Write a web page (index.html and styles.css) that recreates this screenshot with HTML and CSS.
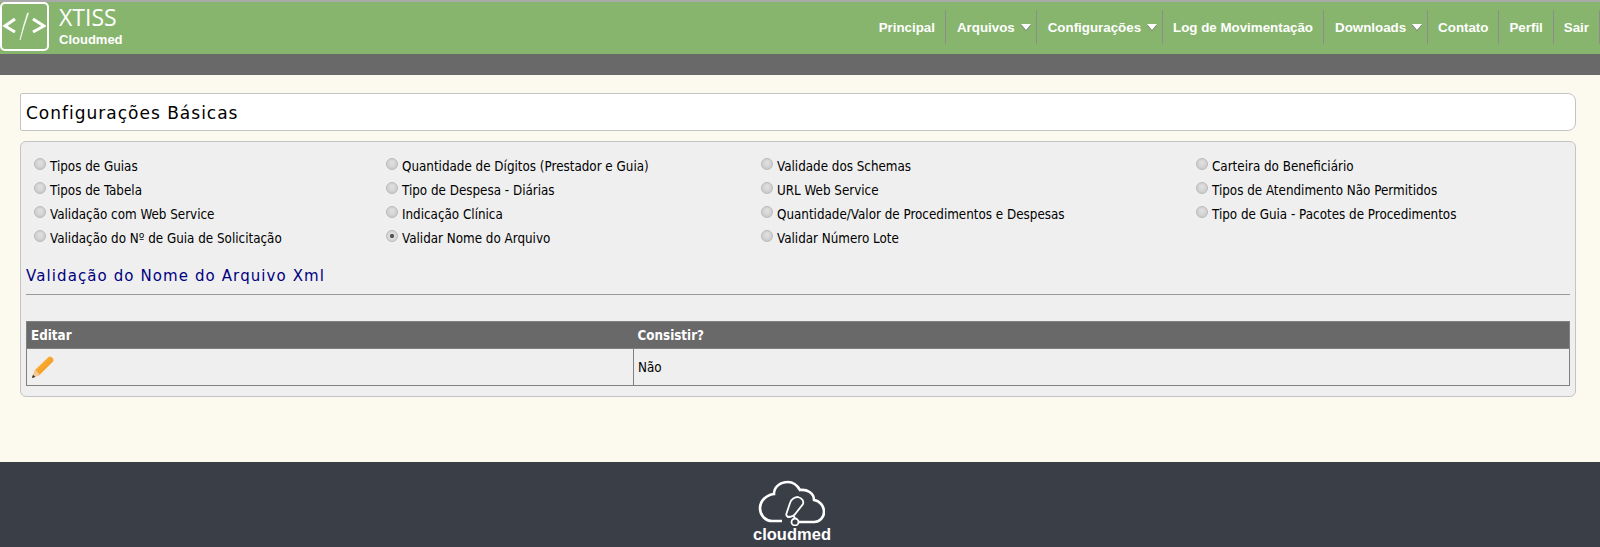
FILE: index.html

```html
<!DOCTYPE html>
<html>
<head>
<meta http-equiv="Content-Type" content="text/html;charset=utf-8">
<title>XTISS Cloudmed</title>
<link rel="stylesheet" href="styles.css">
</head>
<body>
<div class="topbar">
  <div class="brand">
    <div class="logo-box">
      <svg width="44" height="44" viewBox="0 0 44 44">
        <path d="M13 15 L3 22 L13 28" class="logo-stroke"/>
        <path d="M31 15 L42 22 L31 28" class="logo-stroke"/>
        <path d="M25.500 9 Q21 22 18 36 Q22 22 26.500 9 Z" class="logo-slash"/>
      </svg>
    </div>
    <div class="brand-text">
      <div class="brand-name">XTISS</div>
      <div class="brand-sub">Cloudmed</div>
    </div>
  </div>
  <ul class="nav">
    <li><a href="#">Principal</a></li>
    <li><a href="#" class="drop">Arquivos</a></li>
    <li><a href="#" class="drop">Configurações</a></li>
    <li><a href="#">Log de Movimentação</a></li>
    <li><a href="#" class="drop">Downloads</a></li>
    <li><a href="#">Contato</a></li>
    <li><a href="#">Perfil</a></li>
    <li><a href="#">Sair</a></li>
  </ul>
</div>
<div class="subbar"></div>

<div class="content">
  <div class="title-box">Configurações Básicas</div>
  <div class="panel">
    <form class="options">
      <label><input type="radio" name="opt">Tipos de Guias</label>
      <label><input type="radio" name="opt">Quantidade de Dígitos (Prestador e Guia)</label>
      <label><input type="radio" name="opt">Validade dos Schemas</label>
      <label><input type="radio" name="opt">Carteira do Beneficiário</label>
      <label><input type="radio" name="opt">Tipos de Tabela</label>
      <label><input type="radio" name="opt">Tipo de Despesa - Diárias</label>
      <label><input type="radio" name="opt">URL Web Service</label>
      <label><input type="radio" name="opt">Tipos de Atendimento Não Permitidos</label>
      <label><input type="radio" name="opt">Validação com Web Service</label>
      <label><input type="radio" name="opt">Indicação Clínica</label>
      <label><input type="radio" name="opt">Quantidade/Valor de Procedimentos e Despesas</label>
      <label><input type="radio" name="opt">Tipo de Guia - Pacotes de Procedimentos</label>
      <label><input type="radio" name="opt">Validação do Nº de Guia de Solicitação</label>
      <label><input type="radio" name="opt" checked>Validar Nome do Arquivo</label>
      <label><input type="radio" name="opt">Validar Número Lote</label>
    </form>
    <h3 class="section-title">Validação do Nome do Arquivo Xml</h3>
    <table class="grid">
      <tr>
        <th class="col-edit">Editar</th>
        <th>Consistir?</th>
      </tr>
      <tr>
        <td class="col-edit">
          <svg class="pencil" width="24" height="24" viewBox="0 0 24 24">
            <defs>
              <linearGradient id="pen" x1="0" y1="0" x2="1" y2="1">
                <stop offset="0" stop-color="#ffc04a"/>
                <stop offset="1" stop-color="#f08a10"/>
              </linearGradient>
            </defs>
            <path d="M1 23 L4 15 L17.500 2 Q19 1 20.500 2 L22 3.500 Q23 5 22 6.500 L8.500 20 Z" fill="url(#pen)"/>
            <path d="M1 23 L4 15 Q6 15.500 6.500 17.500 Q8.500 18 8.500 20 Z" fill="#f4c79c"/>
            <path d="M1 23 L2 19.800 L4.200 22 Z" fill="#222"/>
          </svg>
        </td>
        <td>Não</td>
      </tr>
    </table>
  </div>
</div>

<div class="footer">
  <svg width="68" height="46" viewBox="0 0 68 46" class="cloud">
    <path d="M41 42 H57 C63 42 67 37 67 32 C67 26 63 21 57 20 C57 13 50 9 43 10 C40 5 36 2 31 2 C23 2 17 7 17 14 C9 15 3 21 3 28 C3 36 9 41 15 41 H25" class="cloud-line"/>
    <circle cx="38" cy="42" r="3.500" class="cloud-thin"/>
    <path d="M38 38 L36 35 M29 35 L33 23 C34 19 38 17 41 17 C45 18 47 21 46 24 L39 33 C37 36 33 37 31 37 L29 35" class="cloud-thin"/>
  </svg>
  <div class="footer-name">cloudmed</div>
</div>
</body>
</html>
```

FILE: styles.css

```css
html, body {
	margin: 0;
	padding: 0;
}

body {
	background: #fcf9ee;
	font-family: "DejaVu Sans Condensed", "DejaVu Sans", sans-serif;
	font-size: 13.3px;
	color: #000;
	height: 547px;
	overflow: hidden;
	display: flex;
	flex-direction: column;
}

.topbar {
	height: 52px;
	background: #88b56e;
	border-top: 2px solid #a9a9a9;
	display: flex;
	justify-content: space-between;
}

.brand {
	display: flex;
}

.logo-box {
	width: 45px;
	height: 45px;
	border: 2px solid #fff;
	border-radius: 5px;
}

.logo-stroke {
	fill: none;
	stroke: #fff;
	stroke-width: 3;
}

.logo-slash {
	fill: #fff;
	stroke: #fff;
	stroke-width: 0.6;
}

.brand-text {
	margin-left: 10px;
	color: #fff;
}

.brand-name {
	font-family: "Open Sans", sans-serif;
	font-size: 23px;
	line-height: 30px;
}

.brand-sub {
	font-family: "Liberation Sans", sans-serif;
	font-size: 13px;
	font-weight: bold;
	line-height: 16px;
}

.nav {
	list-style: none;
	margin: 8px 0 0;
	padding: 0;
	display: flex;
	height: 34px;
}

.nav li {
	border-right: 1px solid #8d8d8d;
	height: 34px;
}

.nav a {
	display: block;
	padding: 0 10px;
	font-family: "Liberation Sans", sans-serif;
	font-size: 13.33px;
	font-weight: bold;
	line-height: 36px;
	color: #fff;
	text-decoration: none;
}

.nav a.drop {
	display: flex;
	align-items: center;
	gap: 6px;
	padding: 0 5px 0 11px;
}

.nav a.drop::after {
	content: "";
	margin-top: -2px;
	border-left: 5.5px solid transparent;
	border-right: 5.5px solid transparent;
	border-top: 6px solid #fff;
	filter: drop-shadow(0 1px 0 #777);
}

.subbar {
	height: 21px;
	background: #696969;
}

.content {
	flex: 1;
	padding: 18px 24px 0 20px;
}

.title-box {
	height: 36px;
	background: #fff;
	border: 1px solid #c4c4c8;
	border-radius: 2px 8px 8px 2px;
	padding-left: 5px;
	font-family: "DejaVu Sans", sans-serif;
	font-size: 17px;
	letter-spacing: 1px;
	line-height: 38px;
}

.panel {
	margin-top: 10px;
	height: 256px;
	box-sizing: border-box;
	background: #efefef;
	border: 1px solid #c4c4c8;
	border-radius: 6px;
	padding: 12px 5px 0;
}

.options {
	display: grid;
	grid-template-columns: 352px 375px 435px auto;
	grid-auto-rows: 24px;
	padding-left: 8px;
}

.options label {
	display: flex;
	align-items: center;
}

.options input {
	appearance: none;
	-webkit-appearance: none;
	box-sizing: border-box;
	width: 12px;
	height: 12px;
	margin: 0 4px 4px 0;
	border: 1px solid #b9b9b9;
	border-radius: 50%;
	background: radial-gradient(circle at 50% 40%, #e2e2e2, #c4c4c4);
}

.options input:checked {
	background: radial-gradient(circle, #555 0, #555 25%, #ddd 35%, #d0d0d0 100%);
}

.section-title {
	margin: 13px 0 0;
	height: 31px;
	border-bottom: 1px solid #999;
	font-family: "DejaVu Sans", sans-serif;
	font-size: 15px;
	font-weight: normal;
	letter-spacing: 1.1px;
	line-height: 26px;
	color: #000080;
}

.grid {
	width: 100%;
	margin-top: 26px;
	border-collapse: collapse;
	border: 1px solid #808080;
}

.grid th {
	height: 26px;
	padding: 0 4px;
	background: #696969;
	color: #fff;
	font-family: "DejaVu Sans Condensed", sans-serif;
	font-size: 13.3px;
	text-align: left;
	border-bottom: 1px solid #808080;
}

.grid td {
	height: 36px;
	padding: 0 4px;
}

.col-edit {
	width: 607px;
	box-sizing: border-box;
	border-right: 1px solid #808080;
}

.grid th.col-edit {
	border-right: 0;
}

.pencil {
	display: block;
}

.footer {
	height: 85px;
	padding-right: 16px;
	background: #3a3e46;
	display: flex;
	flex-direction: column;
	align-items: center;
	color: #fff;
}

.cloud {
	margin: 18px 2px 0 0;
	display: block;
}

.cloud-line {
	fill: none;
	stroke: #fff;
	stroke-width: 2.6;
}

.cloud-thin {
	fill: none;
	stroke: #fff;
	stroke-width: 1.800;
}

.footer-name {
	font-family: "Liberation Sans", sans-serif;
	font-size: 16.5px;
	font-weight: bold;
	line-height: 18px;
	margin-top: -1px;
}
```
